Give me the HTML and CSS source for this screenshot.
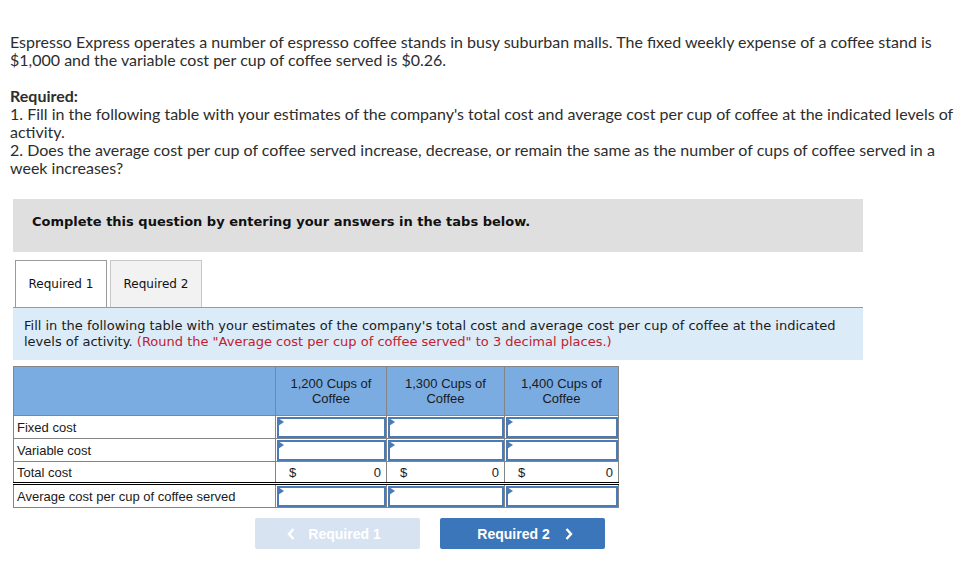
FILE: index.html
```html
<!DOCTYPE html>
<html>
<head>
<meta charset="utf-8">
<link rel="stylesheet" href="styles.css">
</head>
<body>
<div class="page">
  <div class="question">
    <p class="intro">Espresso Express operates a number of espresso coffee stands in busy suburban malls. The fixed weekly expense of a coffee stand is $1,000 and the variable cost per cup of coffee served is $0.26.</p>
    <p class="req"><b>Required:</b><br>1. Fill in the following table with your estimates of the company's total cost and average cost per cup of coffee at the indicated levels of activity.<br>2. Does the average cost per cup of coffee served increase, decrease, or remain the same as the number of cups of coffee served in a week increases?</p>
  </div>
  <div class="work">
    <div class="banner">Complete this question by entering your answers in the tabs below.</div>
    <div class="tabs">
      <div class="tab active">Required 1</div>
      <div class="tab">Required 2</div>
    </div>
    <div class="instr">Fill in the following table with your estimates of the company's total cost and average cost per cup of coffee at the indicated levels of activity. <span class="red">(Round the "Average cost per cup of coffee served" to 3 decimal places.)</span></div>
    <table class="grid">
      <colgroup>
        <col class="c0"><col class="c1"><col class="c2"><col class="c3">
      </colgroup>
      <thead>
        <tr><th></th><th>1,200 Cups of<br>Coffee</th><th>1,300 Cups of<br>Coffee</th><th>1,400 Cups of<br>Coffee</th></tr>
      </thead>
      <tbody>
        <tr><td class="lbl">Fixed cost</td><td class="in"><div class="box"></div></td><td class="in"><div class="box"></div></td><td class="in"><div class="box"></div></td></tr>
        <tr><td class="lbl">Variable cost</td><td class="in"><div class="box"></div></td><td class="in"><div class="box"></div></td><td class="in"><div class="box"></div></td></tr>
        <tr class="total"><td class="lbl">Total cost</td><td class="val"><span>$</span><span>0</span></td><td class="val"><span>$</span><span>0</span></td><td class="val"><span>$</span><span>0</span></td></tr>
        <tr><td class="lbl">Average cost per cup of coffee served</td><td class="in"><div class="box"></div></td><td class="in"><div class="box"></div></td><td class="in"><div class="box"></div></td></tr>
      </tbody>
    </table>
    <div class="nav">
      <button class="btn prev"><svg width="10" height="14" viewBox="0 0 10 14"><path d="M7.5 2 L3 7 L7.5 12" fill="none" stroke="#fff" stroke-width="2.4"/></svg><span>Required 1</span></button>
      <button class="btn next"><span>Required 2</span><svg width="10" height="14" viewBox="0 0 10 14"><path d="M2.5 2 L7 7 L2.5 12" fill="none" stroke="#fff" stroke-width="2.4"/></svg></button>
    </div>
  </div>
</div>
</body>
</html>
```

FILE: styles.css
```css
* { box-sizing: border-box; }
html, body { margin: 0; padding: 0; background: #fff; }
.page { padding: 33px 10px 0 10px; }
.question {
  font-family: Lato, "Open Sans", sans-serif;
  font-size: 16px;
  line-height: 18px;
  color: #2d2d2d;
  width: 950px;
}
.question p { margin: 0; }
.intro { margin-bottom: 18px !important; }
.req b { font-weight: 700; }
.work { width: 850px; margin: 22px 0 0 3px; }
.banner {
  background: #dfdfdf;
  height: 53px;
  padding: 15px 0 0 19px;
  font-family: "DejaVu Sans", Verdana, sans-serif;
  font-weight: bold;
  font-size: 13px;
  line-height: 16px;
  color: #111;
}
.tabs {
  display: flex;
  gap: 3px;
  margin-top: 8px;
  padding-left: 2px;
  border-bottom: 1px solid #9a9a9a;
}
.tab {
  width: 92px;
  height: 47px;
  display: flex;
  align-items: center;
  justify-content: center;
  font-family: "DejaVu Sans", Verdana, sans-serif;
  font-size: 12px;
  color: #111;
  background: #f2f2f2;
  border: 1px solid #c8c8c8;
  border-bottom: none;
}
.tab.active { background: #fff; border-color: #9a9a9a; }
.instr {
  background: #dbebf8;
  height: 52px;
  padding: 10px 20px 0 11px;
  font-family: "DejaVu Sans", Verdana, sans-serif;
  font-size: 13px;
  line-height: 16px;
  color: #1a1a1a;
}
.red { color: #c2202f; }
.grid {
  margin-top: 6px;
  border-collapse: collapse;
  width: 605px;
  table-layout: fixed;
  font-family: "Liberation Sans", Arial, sans-serif;
  font-size: 13px;
  color: #1a1a1a;
}
.c0 { width: 262px; }
.c1 { width: 111px; }
.c2 { width: 118px; }
.c3 { width: 114px; }
.grid th {
  background: #7aace2;
  border: 1px solid #858585;
  height: 49px;
  font-weight: normal;
  line-height: 15px;
  padding: 0 0 1px 0;
  vertical-align: middle;
}
.grid td {
  border: 1px solid #858585;
  height: 23px;
  padding: 0;
}
.grid td.lbl { padding: 0 0 0 3px; }
.grid td.in { padding: 1px 0 0 1px; vertical-align: top; }
.box {
  position: relative;
  height: 21px;
  border: 2px solid #4a7bb7;
  background: #fff;
}
.box::before {
  content: "";
  position: absolute;
  left: -1px;
  top: -1px;
  border-top: 4px solid transparent;
  border-bottom: 4px solid transparent;
  border-left: 6px solid #4a7bb7;
}
.grid tr.total td { height: 22px; border-top: 1px solid #000; border-bottom: 3px double #000; }
.grid td.val { padding: 0 5px 0 13px; }
.grid td.val span:last-child { float: right; }
.nav {
  display: flex;
  gap: 20px;
  margin-top: 10px;
  padding-left: 242px;
}
.btn {
  width: 165px;
  height: 31px;
  border: none;
  border-radius: 2px;
  display: flex;
  align-items: center;
  justify-content: center;
  gap: 12px;
  font-family: "Liberation Sans", Arial, sans-serif;
  font-weight: bold;
  font-size: 14px;
  color: #fff;
  padding: 0;
}
.prev { background: #d7e3f1; }
.next { background: #3a76b9; gap: 14px; }
.prev span { margin-right: 8px; }
.next span { margin-left: 6px; }
```
